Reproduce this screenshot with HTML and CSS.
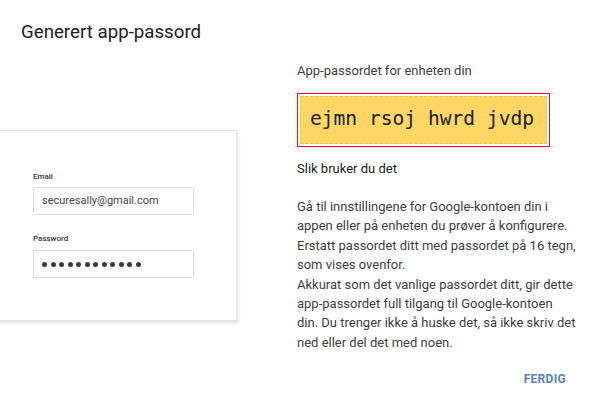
FILE: index.html
```html
<!DOCTYPE html>
<html lang="no">
<head>
<meta charset="utf-8">
<title>Generert app-passord</title>
<link rel="stylesheet" href="styles.css">
</head>
<body>
<div class="dialog">
  <h1 class="title">Generert app-passord</h1>
  <div class="content">
    <div class="illus">
      <div class="card">
        <div class="field-label">Email</div>
        <div class="field-input">securesally@gmail.com</div>
        <div class="field-label second">Password</div>
        <div class="field-input dots">
          <span></span><span></span><span></span><span></span><span></span><span></span>
          <span></span><span></span><span></span><span></span><span></span><span></span>
        </div>
      </div>
    </div>
    <div class="info">
      <div class="info-label">App-passordet for enheten din</div>
      <div class="pw-frame"><div class="pw-box">ejmn rsoj hwrd jvdp</div></div>
      <div class="info-heading">Slik bruker du det</div>
      <p class="info-text">Gå til innstillingene for Google-kontoen din i appen eller på enheten du prøver å konfigurere. Erstatt passordet ditt med passordet på 16 tegn, som vises ovenfor.<br>Akkurat som det vanlige passordet ditt, gir dette app-passordet full tilgang til Google-kontoen din.&nbsp;Du trenger ikke å huske det, så ikke skriv det ned eller del det med noen.</p>
    </div>
  </div>
  <div class="actions"><button class="done">FERDIG</button></div>
</div>
</body>
</html>
```

FILE: styles.css
```css
* { box-sizing: border-box; }
html, body {
  margin: 0;
  padding: 0;
  background: #fff;
  font-family: Roboto, "Liberation Sans", Arial, sans-serif;
}
.dialog {
  width: 594px;
  height: 407px;
  overflow: hidden;
  display: flex;
  flex-direction: column;
}
.title {
  margin: 0;
  padding: 20px 0 0 21px;
  font-size: 18.7px;
  line-height: 24px;
  font-weight: 400;
  color: #202124;
}
.content {
  display: flex;
  align-items: flex-start;
}
.illus {
  width: 297px;
  flex: none;
  overflow: hidden;
  padding: 86px 0 12px 0;
}
.card {
  margin-left: -20px;
  width: 257px;
  height: 191px;
  background: #fff;
  border: 1px solid #e2e2e2;
  box-shadow: 1px 2px 4px rgba(0,0,0,0.12);
  padding: 41px 0 0 52px;
}
.field-label {
  font-size: 8px;
  line-height: 10px;
  font-weight: 500;
  color: #333;
  margin-bottom: 5px;
}
.field-label.second {
  margin-top: 19px;
  margin-bottom: 6px;
}
.field-input {
  width: 161px;
  height: 28px;
  border: 1px solid #dcdcdc;
  border-radius: 1px;
  padding-left: 8px;
  font-size: 11px;
  line-height: 26px;
  color: #444;
  display: flex;
  align-items: center;
}
.dots {
  gap: 3.5px;
}
.dots span {
  width: 5px;
  height: 5px;
  border-radius: 50%;
  background: #3a3a3a;
  flex: none;
}
.info {
  flex: 1;
  padding-top: 16.5px;
  padding-right: 10px;
  color: #3c4043;
}
.info-label {
  font-size: 13px;
  line-height: 20px;
  color: #3c4043;
}
.pw-frame {
  margin-top: 12.5px;
  width: 253px;
  height: 54px;
  border: 1px solid #e8131b;
  padding: 2px;
}
.pw-box {
  height: 100%;
  background: #fdd663;
  border: 1px dashed #f1c94a;
  display: flex;
  align-items: center;
  justify-content: center;
  padding-bottom: 3px;
  padding-right: 3px;
  font-family: "DejaVu Sans Mono", "Liberation Mono", monospace;
  font-size: 19.6px;
  color: #202124;
}
.info-heading {
  margin-top: 11.5px;
  font-size: 13px;
  line-height: 20px;
  font-weight: 400;
  color: #202124;
}
.info-text {
  margin: 18.5px 0 0 0;
  font-size: 13px;
  line-height: 19.4px;
  color: #3c4043;
}
.actions {
  display: flex;
  justify-content: flex-end;
  padding: 20px 28px 0 0;
}
.done {
  border: none;
  background: none;
  padding: 0;
  font-family: Roboto, "Liberation Sans", Arial, sans-serif;
  font-size: 12px;
  font-weight: 700;
  letter-spacing: 0.3px;
  color: #5b80c2;
  cursor: pointer;
}
```
